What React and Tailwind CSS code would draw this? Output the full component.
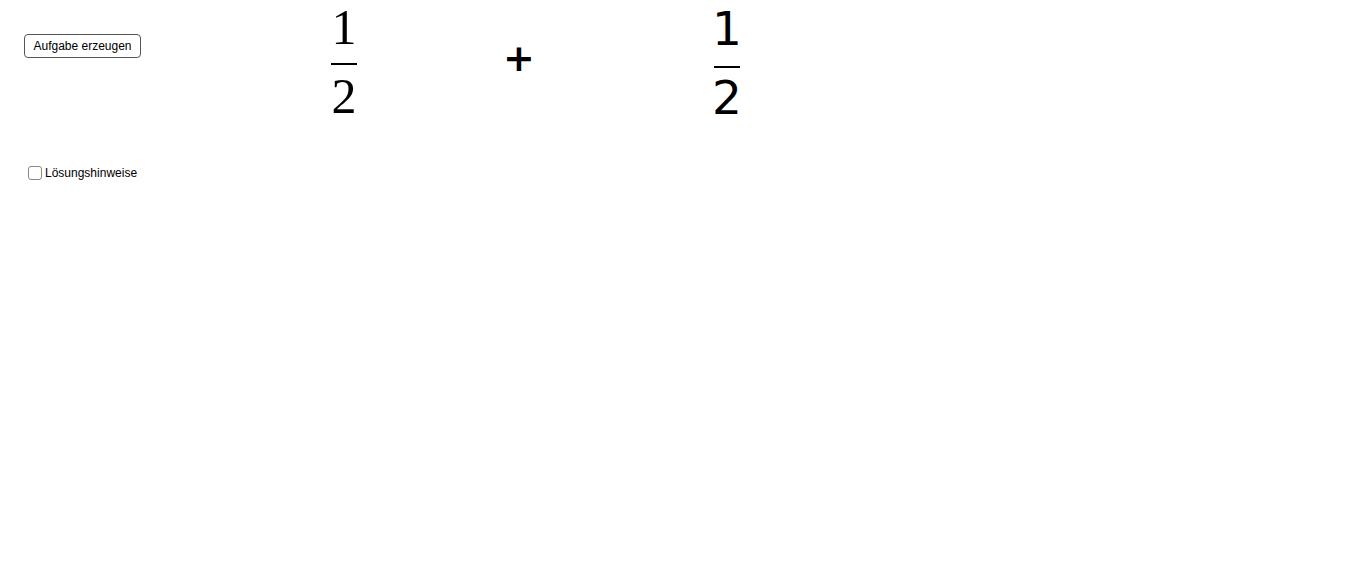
export default function App() {
  return (
    <div className="relative w-[1368px] h-[575px] bg-white overflow-hidden font-['Liberation_Sans',Arial,sans-serif] text-black">
      {/* generate button */}
      <button
        type="button"
        className="absolute left-[24px] top-[34px] w-[117px] h-[24px] border border-[#555] rounded-[4px] bg-white text-[12px] leading-none text-black flex items-center justify-center"
      >
        Aufgabe erzeugen
      </button>

      {/* first fraction */}
      <div className="absolute left-[331px] top-0 w-[26px] flex flex-col items-center font-['Liberation_Serif',serif] text-[50px] leading-none">
        <span className="block h-[58px] pt-[2px]">1</span>
        <span className="block w-[26px] h-[2px] bg-black mt-[5px]"></span>
        <span className="block mt-[6px]">2</span>
      </div>

      {/* plus sign */}
      <div className="absolute left-[503px] top-[39px] font-['DejaVu_Sans',sans-serif] font-bold text-[38px] leading-none">
        +
      </div>

      {/* second fraction */}
      <div className="absolute left-[714px] top-0 w-[26px] flex flex-col items-center font-['DejaVu_Sans',sans-serif] text-[47px] leading-none">
        <span className="block h-[60px] pt-[5px]">1</span>
        <span className="block w-[26px] h-[2px] bg-black mt-[6px]"></span>
        <span className="block mt-[6px]">2</span>
      </div>

      {/* hints checkbox */}
      <label className="absolute left-[28px] top-[166px] flex items-center gap-[3px] text-[12px] leading-none">
        <span className="block w-[14px] h-[14px] border border-[#888] rounded-[3px] bg-white"></span>
        <span>Lösungshinweise</span>
      </label>
    </div>
  );
}
